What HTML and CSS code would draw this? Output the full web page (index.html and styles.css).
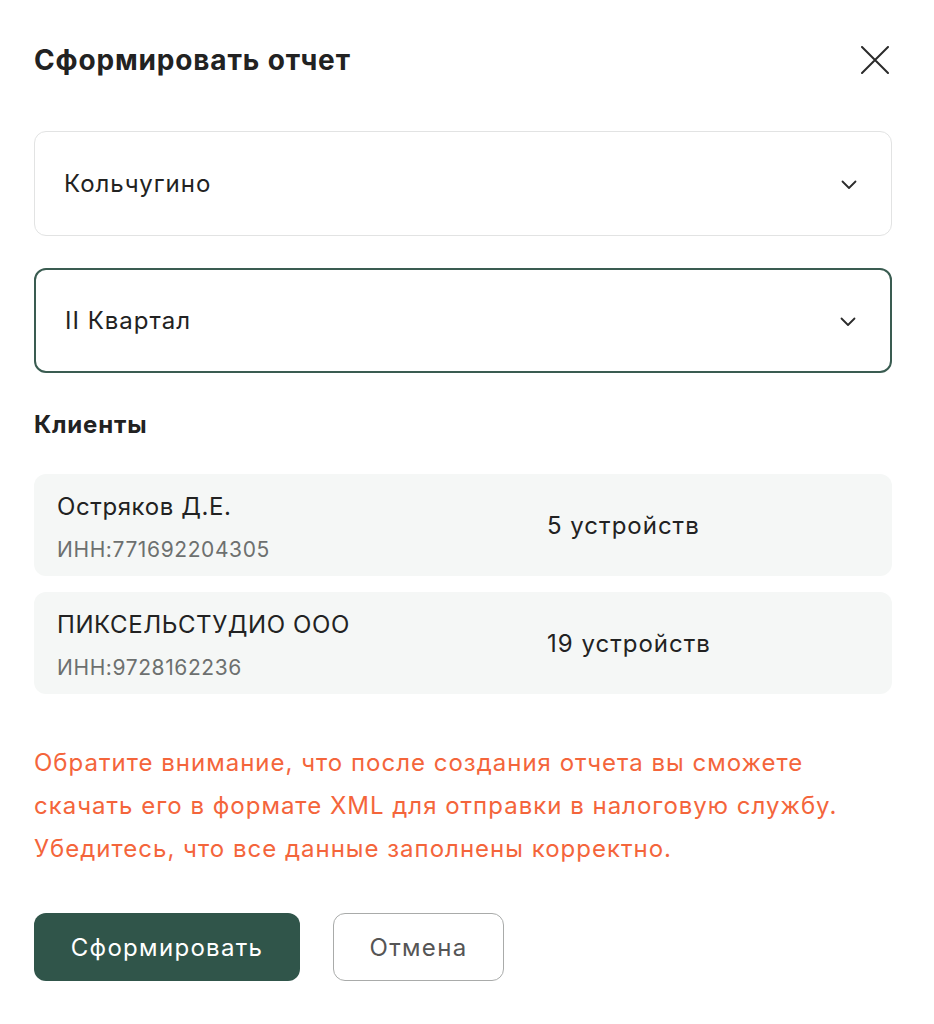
FILE: index.html
```html
<!DOCTYPE html>
<html lang="ru">
<head>
<meta charset="utf-8">
<title>Сформировать отчет</title>
<link rel="stylesheet" href="styles.css">
</head>
<body>
<div class="modal">
  <div class="header">
    <h1 class="title">Сформировать отчет</h1>
    <button class="close" aria-label="Закрыть">
      <svg width="28" height="28" viewBox="0 0 28 28" fill="none" stroke="#2b2b2b" stroke-width="2" stroke-linecap="round"><path d="M1 1L27 27M27 1L1 27"/></svg>
    </button>
  </div>

  <div class="select">
    <span class="select-value">Кольчугино</span>
    <svg class="chev" width="16" height="10" viewBox="0 0 16 10" fill="none" stroke="#2b2b2b" stroke-width="1.8" stroke-linecap="round" stroke-linejoin="round"><path d="M1.5 1.5L8 8L14.5 1.5"/></svg>
  </div>

  <div class="select active">
    <span class="select-value">II Квартал</span>
    <svg class="chev" width="16" height="10" viewBox="0 0 16 10" fill="none" stroke="#2b2b2b" stroke-width="1.8" stroke-linecap="round" stroke-linejoin="round"><path d="M1.5 1.5L8 8L14.5 1.5"/></svg>
  </div>

  <h2 class="section">Клиенты</h2>

  <div class="clients">
    <div class="client">
      <div class="client-info">
        <div class="client-name">Остряков Д.Е.</div>
        <div class="client-inn">ИНН:771692204305</div>
      </div>
      <div class="client-devices">5 устройств</div>
    </div>
    <div class="client">
      <div class="client-info">
        <div class="client-name">ПИКСЕЛЬСТУДИО ООО</div>
        <div class="client-inn">ИНН:9728162236</div>
      </div>
      <div class="client-devices">19 устройств</div>
    </div>
  </div>

  <p class="warning">Обратите внимание, что после создания отчета вы сможете скачать его в формате XML для отправки в налоговую службу. Убедитесь, что все данные заполнены корректно.</p>

  <div class="actions">
    <button class="btn btn-primary">Сформировать</button>
    <button class="btn btn-secondary">Отмена</button>
  </div>
</div>
</body>
</html>
```

FILE: styles.css
```css
* { box-sizing: border-box; }
html, body { margin: 0; padding: 0; background: #fff; }
body {
  font-family: Inter, "Open Sans", "Noto Sans", sans-serif;
  color: #222;
}
.modal {
  width: 934px;
  padding: 40px 42px 0 34px;
}
.header {
  display: flex;
  align-items: center;
  justify-content: space-between;
  height: 40px;
}
.title {
  margin: 0;
  font-size: 28px;
  font-weight: 700;
  line-height: 40px;
  color: #222;
  letter-spacing: 0.85px;
}
.close {
  border: 0;
  background: none;
  padding: 0;
  margin-right: 3px;
  width: 28px;
  height: 28px;
  display: flex;
}
.select {
  display: flex;
  align-items: center;
  justify-content: space-between;
  height: 105px;
  margin-top: 51px;
  padding: 0 34px 0 29px;
  border: 1.5px solid #e2e3e3;
  border-radius: 12px;
  font-size: 24px;
  letter-spacing: 1px;
  color: #222;
}
.select.active {
  margin-top: 32px;
  border: 2px solid #3a5c51;
}
.select .chev { margin-top: 3px; }
.section {
  margin: 37px 0 0;
  font-size: 24px;
  font-weight: 700;
  line-height: 30px;
  letter-spacing: 0.8px;
  color: #222;
}
.clients {
  margin-top: 34px;
  display: flex;
  flex-direction: column;
  gap: 16px;
}
.client {
  display: grid;
  grid-template-columns: 490px 1fr;
  align-items: center;
  height: 102px;
  padding: 0 23px;
  background: #f5f7f6;
  border-radius: 12px;
}
.client-info {
  display: flex;
  flex-direction: column;
  align-self: start;
  margin-top: 18px;
}
.client-name {
  font-size: 24px;
  line-height: 30px;
  letter-spacing: 0.6px;
  color: #222;
}
.client-inn {
  margin-top: 13px;
  font-size: 21px;
  line-height: 30px;
  letter-spacing: 0.6px;
  color: #6d706f;
}
.client-devices {
  font-size: 24px;
  letter-spacing: 1px;
  color: #222;
}
.warning {
  margin: 47px 0 0;
  font-size: 24px;
  line-height: 43px;
  letter-spacing: 1px;
  color: #f4653b;
}
.actions {
  display: flex;
  gap: 33px;
  margin-top: 43px;
}
.btn {
  height: 68px;
  border-radius: 12px;
  font-family: inherit;
  font-size: 24px;
  letter-spacing: 1.3px;
  cursor: pointer;
}
.btn-primary {
  width: 266px;
  background: #30554a;
  color: #fff;
  border: 0;
}
.btn-secondary {
  width: 171px;
  background: #fff;
  color: #555;
  border: 1.5px solid #a9abaa;
}
```
